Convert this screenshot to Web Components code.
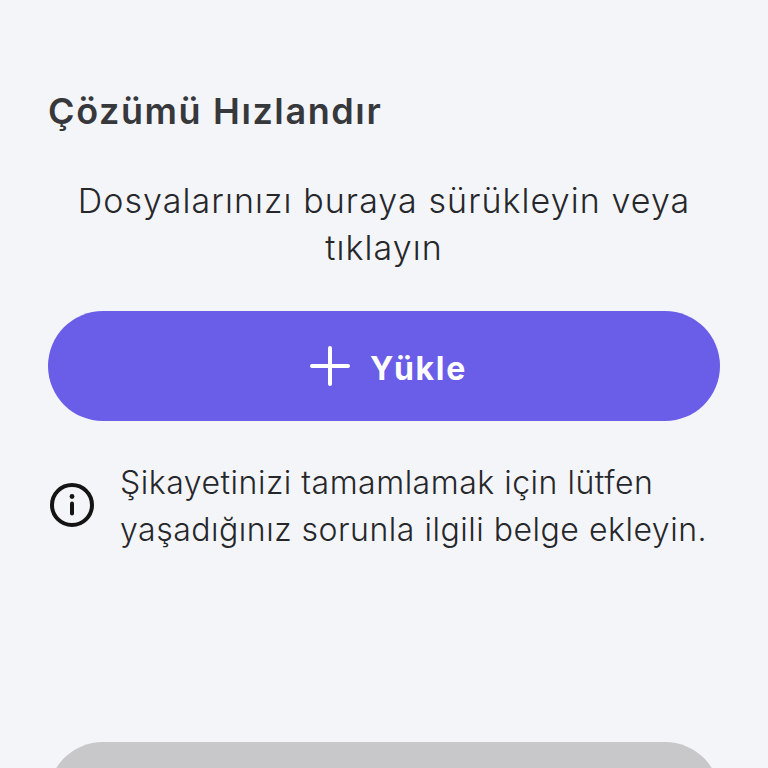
<!DOCTYPE html>
<html>
<head>
<meta charset="utf-8">
<style>
html, body { margin: 0; height: 100%; overflow: hidden; background: #f4f5f9; }
</style>
</head>
<body>
<upload-page></upload-page>
<script>
const btnTemplate = document.createElement('template');
btnTemplate.innerHTML = `
  <style>
    :host {
      display: flex;
      align-items: center;
      justify-content: center;
      gap: 20px;
      height: 110px;
      padding-left: 9px;
      border-radius: 55px;
      background: #6a5de8;
      color: #fff;
      font-weight: 700;
      font-size: 32px;
      letter-spacing: 1.7px;
    }
    svg { width: 40px; height: 40px; display: block; }
    span { padding-top: 4px; }
  </style>
  <svg viewBox="0 0 40 40"><path d="M20 2v36M2 20h36" stroke="#fff" stroke-width="4" stroke-linecap="round" fill="none"/></svg>
  <span><slot></slot></span>
`;
class UploadButton extends HTMLElement {
  constructor() {
    super();
    this.attachShadow({mode: 'open'});
    this.shadowRoot.appendChild(btnTemplate.content.cloneNode(true));
  }
}
customElements.define('upload-button', UploadButton);

const noteTemplate = document.createElement('template');
noteTemplate.innerHTML = `
  <style>
    :host {
      display: flex;
      align-items: center;
      gap: 25px;
      font-size: 32px;
      line-height: 47px;
      letter-spacing: 0.52px;
      font-weight: 300;
      color: #26272a;
    }
    svg { width: 46px; height: 46px; flex: none; margin: -2px 0 0 1px; }
  </style>
  <svg viewBox="0 0 46 46" fill="none">
    <circle cx="23" cy="23" r="20" stroke="#141414" stroke-width="4"/>
    <circle cx="23" cy="14.5" r="2.4" fill="#141414"/>
    <path d="M23 21.5v10" stroke="#141414" stroke-width="4" stroke-linecap="round"/>
  </svg>
  <div><slot></slot></div>
`;
class InfoNote extends HTMLElement {
  constructor() {
    super();
    this.attachShadow({mode: 'open'});
    this.shadowRoot.appendChild(noteTemplate.content.cloneNode(true));
  }
}
customElements.define('info-note', InfoNote);

const pageTemplate = document.createElement('template');
pageTemplate.innerHTML = `
  <style>
    :host {
      display: flex;
      flex-direction: column;
      height: 768px;
      box-sizing: border-box;
      padding: 89px 48px 0;
      overflow: hidden;
      font-family: "Inter", "Noto Sans", sans-serif;
      background: #f4f5f9;
    }
    h1 {
      margin: 0;
      font-size: 36px;
      line-height: 44px;
      font-weight: 600;
      letter-spacing: 1.6px;
      color: #37383b;
    }
    p {
      margin: 44px 0 0;
      text-align: center;
      font-size: 34px;
      line-height: 47px;
      font-weight: 300;
      letter-spacing: 1.08px;
      color: #26272a;
    }
    upload-button { margin-top: 40px; }
    info-note { margin-top: 38px; }
    .next {
      margin-top: auto;
      flex: none;
      height: 110px;
      margin-bottom: -84px;
      border-radius: 55px;
      background: #c8c8ca;
    }
  </style>
  <h1>Çözümü Hızlandır</h1>
  <p>Dosyalarınızı buraya sürükleyin veya tıklayın</p>
  <upload-button>Yükle</upload-button>
  <info-note>Şikayetinizi tamamlamak için lütfen yaşadığınız sorunla ilgili belge ekleyin.</info-note>
  <div class="next"></div>
`;
class UploadPage extends HTMLElement {
  constructor() {
    super();
    this.attachShadow({mode: 'open'});
    this.shadowRoot.appendChild(pageTemplate.content.cloneNode(true));
  }
}
customElements.define('upload-page', UploadPage);
</script>
</body>
</html>
